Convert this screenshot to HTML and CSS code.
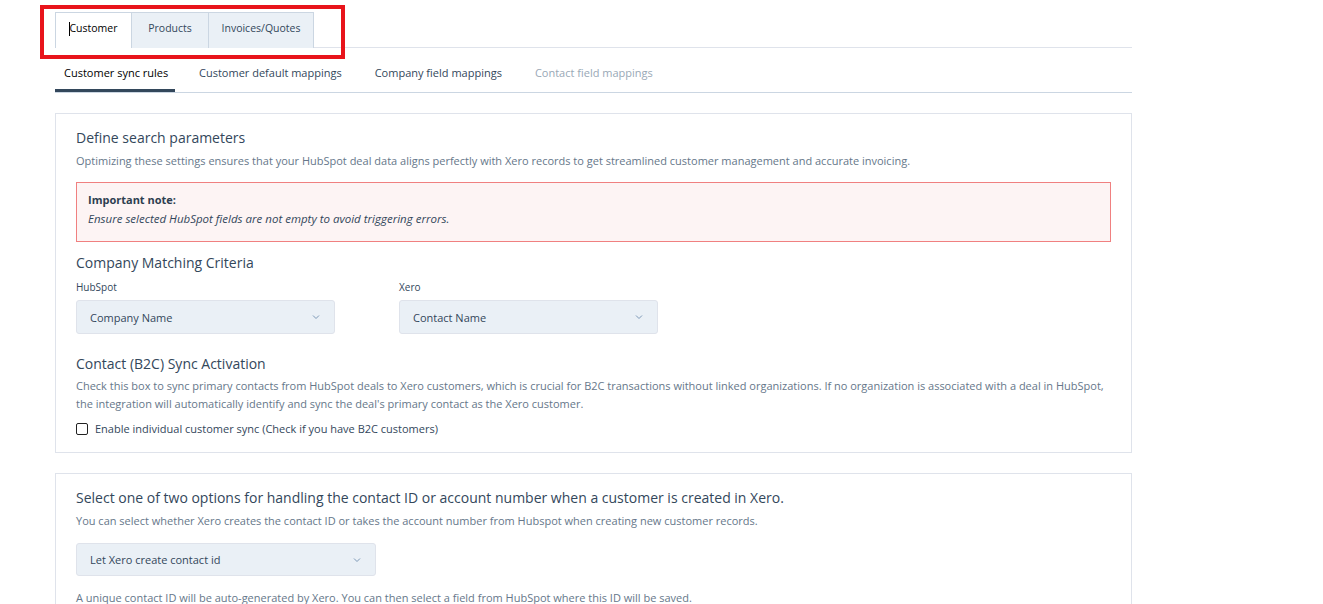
FILE: index.html
```html
<!DOCTYPE html>
<html lang="en">

<head>
    <meta charset="UTF-8">
    <meta name="viewport" content="width=device-width, initial-scale=1.0">
    <title>Customer sync rules</title>
    <link rel="stylesheet" href="styles.css">
</head>

<body>
    <div class="page">
        <!-- top tabs -->
        <div class="tabs-row">
            <div class="tabs-mark">
                <ul class="tabs">
                    <li class="active"><span class="caret"></span>Customer</li>
                    <li>Products</li>
                    <li>Invoices/Quotes</li>
                </ul>
            </div>
        </div>

        <!-- sub tabs -->
        <ul class="subtabs">
            <li class="active">Customer sync rules</li>
            <li>Customer default mappings</li>
            <li>Company field mappings</li>
            <li class="disabled">Contact field mappings</li>
        </ul>

        <!-- card 1 -->
        <div class="card">
            <h2>Define search parameters</h2>
            <p class="desc">Optimizing these settings ensures that your HubSpot deal data aligns perfectly with Xero records to get streamlined customer management and accurate invoicing.</p>

            <div class="alert">
                <strong>Important note:</strong>
                <em>Ensure selected HubSpot fields are not empty to avoid triggering errors.</em>
            </div>

            <h2>Company Matching Criteria</h2>
            <div class="match">
                <div class="field">
                    <label>HubSpot</label>
                    <div class="select">
                        <span>Company Name</span>
                        <svg width="10" height="10" viewBox="0 0 10 10"><path d="M2 3.5 L5 6.5 L8 3.5" fill="none" stroke="#7c98b6" stroke-width="1"/></svg>
                    </div>
                </div>
                <div class="field">
                    <label>Xero</label>
                    <div class="select">
                        <span>Contact Name</span>
                        <svg width="10" height="10" viewBox="0 0 10 10"><path d="M2 3.5 L5 6.5 L8 3.5" fill="none" stroke="#7c98b6" stroke-width="1"/></svg>
                    </div>
                </div>
            </div>

            <h2>Contact (B2C) Sync Activation</h2>
            <p class="desc lines">Check this box to sync primary contacts from HubSpot deals to Xero customers, which is crucial for B2C transactions without linked organizations. If no organization is associated with a deal in HubSpot, the integration will automatically identify and sync the deal's primary contact as the Xero customer.</p>
            <label class="check">
                <span class="box"></span>
                Enable individual customer sync (Check if you have B2C customers)
            </label>
        </div>

        <!-- card 2 -->
        <div class="card second">
            <h2>Select one of two options for handling the contact ID or account number when a customer is created in Xero.</h2>
            <p class="desc">You can select whether Xero creates the contact ID or takes the account number from Hubspot when creating new customer records.</p>
            <div class="select wide">
                <span>Let Xero create contact id</span>
                <svg width="10" height="10" viewBox="0 0 10 10"><path d="M2 3.5 L5 6.5 L8 3.5" fill="none" stroke="#7c98b6" stroke-width="1"/></svg>
            </div>
            <p class="desc note">A unique contact ID will be auto-generated by Xero. You can then select a field from HubSpot where this ID will be saved.</p>
        </div>
    </div>
</body>

</html>
```

FILE: styles.css
```css
* {
    margin: 0;
    padding: 0;
    box-sizing: border-box;
}

li {
    list-style: none;
}

body {
    font-family: "Open Sans", "Liberation Sans", sans-serif;
    color: #33475b;
    background: #fff;
    overflow: hidden;
}

.page {
    width: 1077px;
    margin-left: 55px;
}

/* top tabs */
.tabs-row {
    border-bottom: 1px solid #dfe3eb;
    height: 48px;
    position: relative;
}

.tabs-mark {
    position: absolute;
    left: -15px;
    top: 5px;
    width: 305px;
    height: 54px;
    border: 4px solid #e8141b;
    padding: 3px 0 0 11px;
}

.tabs {
    display: flex;
    height: 36px;
}

.tabs li {
    border: 1px solid #cbd6e2;
    border-bottom: none;
    background: #eaf0f6;
    font-size: 10.5px;
    color: #33475b;
    line-height: 31px;
    width: 77px;
    text-align: center;
    position: relative;
}

.tabs li + li {
    border-left: none;
}

.tabs li:last-child {
    width: 105px;
}

.tabs li.active {
    background: #fff;
    color: #000;
}

.tabs .caret {
    position: absolute;
    left: 13px;
    top: 9px;
    width: 1px;
    height: 14px;
    background: #000;
}

/* sub tabs */
.subtabs {
    display: flex;
    border-bottom: 1px solid #cbd6e2;
    height: 45px;
}

.subtabs li {
    font-size: 11px;
    color: #33475b;
    padding-top: 17px;
    margin-right: 33px;
    white-space: nowrap;
}

.subtabs li:first-child {
    padding: 17px 0 0 9px;
    width: 120px;
    margin-right: 24px;
    color: #000;
    border-bottom: 3px solid #33475b;
}

.subtabs li.disabled {
    color: #99a8b6;
}

/* cards */
.card {
    margin-top: 20px;
    border: 1px solid #dfe3eb;
    padding: 15px 20px 16px;
}

.card.second {
    height: 140px;
}

.card h2 {
    font-size: 14px;
    font-weight: 400;
    color: #33475b;
    line-height: 18px;
}

.desc {
    font-size: 11px;
    color: #66778a;
    line-height: 18px;
    margin-top: 5px;
}

.desc.lines {
    margin-top: 4px;
}

.alert {
    margin: 12px 0 12px;
    border: 1px solid #f08080;
    background: #fdf4f4;
    padding: 7px 11px 13px;
    font-size: 11px;
    line-height: 19px;
}

.alert strong {
    display: block;
    color: #2d3e50;
    font-weight: 700;
}

.alert em {
    display: block;
    font-size: 11.5px;
    color: #33475b;
}

.match {
    display: flex;
    gap: 64px;
    margin: 9px 0 21px;
}

.field label {
    display: block;
    font-size: 10px;
    line-height: 13px;
    color: #33475b;
    margin-bottom: 6px;
}

.select {
    width: 259px;
    height: 34px;
    background: #eaf0f6;
    border: 1px solid #dfe3eb;
    border-radius: 3px;
    display: flex;
    align-items: center;
    justify-content: space-between;
    padding: 0 13px;
    font-size: 11px;
    color: #33475b;
}

.select.wide {
    width: 300px;
    height: 33px;
    margin-top: 13px;
}

.check {
    display: flex;
    align-items: center;
    gap: 7px;
    margin-top: 9px;
    font-size: 11px;
    line-height: 14px;
    color: #33475b;
}

.check .box {
    width: 12px;
    height: 12px;
    border: 1px solid #222;
    border-radius: 2px;
}

.note {
    margin-top: 13px;
}
```
